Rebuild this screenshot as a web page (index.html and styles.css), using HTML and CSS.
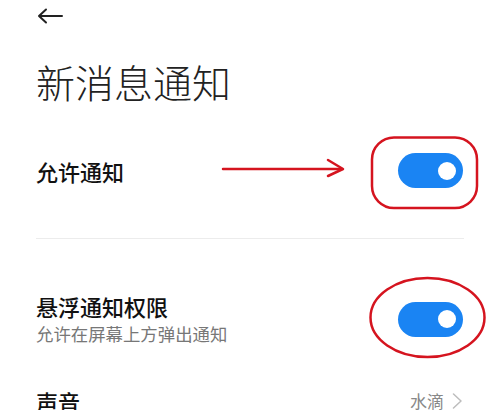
FILE: index.html
```html
<!DOCTYPE html>
<html lang="zh-CN">
<head>
<meta charset="utf-8">
<link rel="stylesheet" href="styles.css">
</head>
<body>
<div class="screen">
  <div class="topbar">
    <svg class="back" width="28" height="16" viewBox="0 0 28 16">
      <path d="M26 8 H3 M10 1.5 L3 8 L10 14.5" fill="none" stroke="#222" stroke-width="2" stroke-linecap="round" stroke-linejoin="round"/>
    </svg>
  </div>
  <h1 class="title">新消息通知</h1>

  <div class="row row-first">
    <div class="label">允许通知</div>
    <div class="toggle on"><span class="knob"></span></div>
  </div>
  <div class="divider"></div>

  <div class="row row-second">
    <div class="texts">
      <div class="label">悬浮通知权限</div>
      <div class="sub">允许在屏幕上方弹出通知</div>
    </div>
    <div class="toggle on"><span class="knob"></span></div>
  </div>

  <div class="row row-third">
    <div class="label">声音</div>
    <div class="value">水滴
      <svg class="chev" width="11" height="16" viewBox="0 0 11 16">
        <path d="M1.5 1 L9 8 L1.5 15" fill="none" stroke="#bdbdbd" stroke-width="1.5" stroke-linecap="round" stroke-linejoin="round"/>
      </svg>
    </div>
  </div>

  <svg class="annot" width="500" height="410" viewBox="0 0 500 410">
    <g fill="none" stroke="#d5141f" stroke-width="2.5" stroke-linecap="round" stroke-linejoin="round">
      <path d="M223 169 H342"/>
      <path d="M328 160 L343 169 L328 176"/>
      <rect x="372" y="137.5" width="105" height="70.5" rx="22" ry="22"/>
      <ellipse cx="427.5" cy="317.5" rx="57" ry="39.5"/>
    </g>
  </svg>
</div>
</body>
</html>
```

FILE: styles.css
```css
* { box-sizing: border-box; }
html, body {
  margin: 0;
  padding: 0;
  background: #ffffff;
}
body {
  width: 500px;
  height: 410px;
  overflow: hidden;
  font-family: "Noto Sans CJK SC", "Noto Sans", sans-serif;
  color: #111;
}
.screen {
  position: relative;
  width: 500px;
  height: 410px;
  padding: 0 36px;
}
.topbar {
  height: 32px;
  display: flex;
  align-items: center;
}
.back {
  display: block;
  margin-left: 0;
}
.title {
  margin: 25px 0 25px 0;
  font-size: 39px;
  line-height: 48px;
  font-weight: 300;
  color: #222;
  height: 48px;
}
.row {
  display: flex;
  align-items: center;
  justify-content: space-between;
}
.row-first {
  height: 81px;
}
.label {
  font-size: 22px;
  line-height: 28px;
  font-weight: 500;
  color: #111;
}
.divider {
  margin-top: 27px;
  height: 1px;
  background: #ececec;
}
.row-second {
  padding-top: 53px;
}
.sub {
  font-size: 17.4px;
  line-height: 26px;
  color: #777;
  margin-top: 0.5px;
}
.toggle {
  width: 65px;
  height: 35px;
  border-radius: 17.5px;
  background: #1a84f3;
  display: flex;
  align-items: center;
  justify-content: flex-end;
  padding-right: 7px;
  margin-right: 1px;
}
.knob {
  width: 18px;
  height: 18px;
  border-radius: 50%;
  background: #ffffff;
}
.row-third {
  margin-top: 40px;
}
.value {
  display: flex;
  align-items: center;
  gap: 8px;
  font-size: 17px;
  line-height: 26px;
  color: #888;
}
.chev {
  display: block;
  margin-right: 1px;
}
.annot {
  position: absolute;
  left: 0;
  top: 0;
  pointer-events: none;
}
```
